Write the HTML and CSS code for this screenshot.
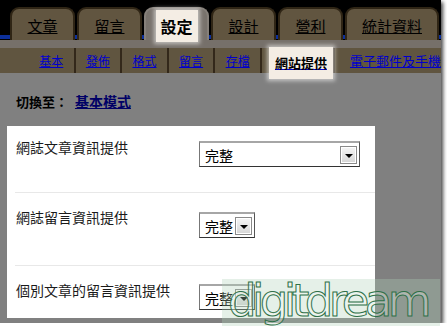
FILE: index.html
```html
<!DOCTYPE html>
<html lang="zh-Hant">
<head>
  <meta charset="UTF-8" />
  <title>設定 - 網站提供</title>
  <link rel="stylesheet" href="styles.css">
</head>
<body>
  <div class="frame">
    <div class="header">
      <div class="tabs">
        <a class="tab" href="#">文章</a>
        <a class="tab" href="#">留言</a>
        <a class="tab active" href="#"><span>設定</span></a>
        <a class="tab" href="#">設計</a>
        <a class="tab" href="#">營利</a>
        <a class="tab wide" href="#">統計資料</a>
      </div>
    </div>
    <div class="band"></div>
    <div class="subnav">
      <a class="sub" href="#">基本</a>
      <a class="sub" href="#">發佈</a>
      <a class="sub" href="#">格式</a>
      <a class="sub" href="#">留言</a>
      <a class="sub" href="#">存檔</a>
      <span class="sub current"><b>網站提供</b></span>
      <a class="sub last" href="#">電子郵件及手機</a>
    </div>

    <div class="content">
      <div class="switch">切換至： <a href="#">基本模式</a></div>

      <div class="panel">
        <div class="row first">
          <div class="label">網誌文章資訊提供</div>
          <div class="select long"><span class="value">完整</span><span class="arrow"></span></div>
        </div>
        <div class="row second">
          <div class="label">網誌留言資訊提供</div>
          <div class="select"><span class="value">完整</span><span class="arrow"></span></div>
        </div>
        <div class="row third">
          <div class="label">個別文章的留言資訊提供</div>
          <div class="select"><span class="value">完整</span><span class="arrow"></span></div>
        </div>
      </div>
    </div>
  </div>

  <div class="watermark">digitdream</div>
</body>
</html>
```

FILE: styles.css
```css
body {
  margin: 0;
  background: #ffffff;
  font-family: "Noto Sans CJK TC", "Liberation Sans", sans-serif;
  color: #111;
}
.frame {
  width: 441px;
  height: 323px;
  overflow: hidden;
  background: #808080;
  box-shadow: 2px 2px 4px rgba(0, 0, 0, 0.75);
}

/* top tabs */
.header {
  height: 40px;
  background: linear-gradient(to bottom, #000 0, #000 35px, #0c2f9a 35px, #0c2f9a 39px, #000 39px);
}
.tabs {
  display: flex;
  gap: 2px;
  padding: 7px 0 0 10px;
}
.tab {
  box-sizing: border-box;
  width: 65px;
  height: 33px;
  padding-top: 3px;
  display: flex;
  align-items: center;
  justify-content: center;
  background: #615540;
  border: 2px solid #2f2515;
  border-bottom: none;
  border-radius: 9px 9px 0 0;
  color: #000;
  font-size: 15px;
  line-height: 18px;
  text-decoration: underline;
}
.tab.wide {
  width: 94px;
}
.tab.active {
  padding-top: 0;
  align-items: flex-start;
  background: #78726c;
  border-color: #86807a;
  text-decoration: none;
}
.tab.active span {
  position: relative;
  z-index: 2;
  margin-top: 1px;
  width: 42px;
  height: 32px;
  display: flex;
  align-items: center;
  justify-content: center;
  background: #f4ede4;
  box-shadow: 0 0 4px 2px rgba(255, 255, 255, 0.55);
  font-size: 16px;
  font-weight: bold;
}
.band {
  height: 8px;
  background: #76706a;
}

/* second row */
.subnav {
  height: 25px;
  display: flex;
  padding-left: 29px;
  background: #605540;
  white-space: nowrap;
}
.sub {
  box-sizing: border-box;
  width: 51px;
  display: flex;
  align-items: center;
  justify-content: center;
  border-right: 2px solid #33281a;
  color: #0000cc;
  font-size: 12px;
  line-height: 14px;
  text-decoration: underline;
}
.sub.current {
  width: 77px;
  justify-content: flex-start;
  padding-left: 7px;
  align-items: flex-start;
}
.sub.current b {
  position: relative;
  z-index: 2;
  margin-top: -1px;
  width: 64px;
  height: 32px;
  display: flex;
  align-items: center;
  justify-content: center;
  background: #f4ede4;
  box-shadow: 0 0 4px 2px rgba(255, 255, 255, 0.55);
  color: #000;
  font-size: 13px;
}
.sub.last {
  width: auto;
  padding-left: 15px;
  border-right: none;
  font-size: 13px;
}

/* content */
.content {
  padding-top: 20px;
}
.switch {
  padding-left: 16px;
  height: 16px;
  line-height: 16px;
  font-size: 13px;
  font-weight: bold;
  color: #000;
}
.switch a {
  margin-left: 4px;
  color: #000066;
  font-size: 14px;
  text-decoration: underline;
}
.panel {
  margin: 17px 0 0 7px;
  width: 368px;
  height: 192px;
  box-sizing: border-box;
  padding-left: 8px;
  background: #fff;
}
.row {
  display: flex;
  align-items: flex-start;
  box-sizing: border-box;
  border-bottom: 1px solid #e8e8e8;
}
.label {
  width: 184px;
  padding-left: 1px;
  box-sizing: border-box;
  font-size: 14px;
  line-height: 16px;
  color: #1a1a1a;
}
.row.first { height: 67px; }
.row.first .label { margin-top: 13px; }
.row.first .select { margin-top: 15px; }
.row.second { height: 73px; }
.row.second .label { margin-top: 16px; }
.row.second .select { margin-top: 19px; }
.row.third { height: 52px; border-bottom: none; }
.row.third .label { margin-top: 16px; }
.row.third .select { margin-top: 18px; }

.select {
  box-sizing: border-box;
  width: 56px;
  height: 26px;
  display: flex;
  align-items: center;
  justify-content: space-between;
  background: #fff;
  border-top: 2px solid #a6a6a6;
  border-left: 1px solid #777;
  border-right: 1px solid #555;
  border-bottom: 1px solid #333;
}
.select.long {
  width: 161px;
}
.value {
  padding-left: 5px;
  font-size: 14px;
  line-height: 16px;
  color: #000;
}
.arrow {
  box-sizing: border-box;
  width: 17px;
  height: 18px;
  margin-right: 2px;
  display: flex;
  align-items: center;
  justify-content: center;
  border: 1px solid #8a8a8a;
  box-shadow: inset 0 0 0 1px #fff;
  background: linear-gradient(#f6f6f6, #d6d6d6);
}
.arrow::after {
  content: "";
  border-left: 4px solid transparent;
  border-right: 4px solid transparent;
  border-top: 4px solid #000;
  margin-top: 2px;
}

/* watermark over the corner */
.watermark {
  position: absolute;
  left: 222px;
  top: 279px;
  width: 218px;
  height: 47px;
  overflow: hidden;
  box-sizing: border-box;
  padding-left: 6px;
  background: rgba(175, 207, 182, 0.32);
  font-family: "DejaVu Sans", sans-serif;
  font-size: 45px;
  line-height: 43px;
  letter-spacing: -4.6px;
  color: rgba(255, 255, 255, 0.3);
  -webkit-text-stroke: 1px #2f7048;
  white-space: nowrap;
}
```
